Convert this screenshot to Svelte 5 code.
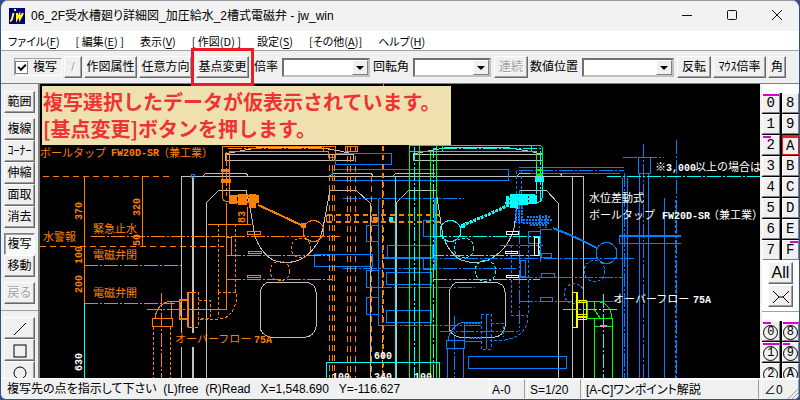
<script lang="ts">
    interface Layer {
        color: string;
        style?: string;
        d: string;
    }

    interface Label {
        x: number;
        y: number;
        text: string;
        color?: string;
        num?: boolean;
        turn?: boolean;
    }

    const ORANGE = '#ff8000';
    const BLUE = '#0080ff';
    const CYAN = '#00ffff';
    const GREEN = '#00ff00';
    const GREY = '#c0c0c0';
    const WHITE = '#ffffff';
    const YELLOW = '#ffff00';

    const menus = [
        { pre: 'ファイル(', key: 'F', post: ')' },
        { pre: '[ 編集(', key: 'E', post: ') ]' },
        { pre: '表示(', key: 'V', post: ')' },
        { pre: '[ 作図(', key: 'D', post: ') ]' },
        { pre: '設定(', key: 'S', post: ')' },
        { pre: '[その他(', key: 'A', post: ')]' },
        { pre: 'ヘルプ(', key: 'H', post: ')' },
    ];

    const toolGroups = [
        ['範囲'],
        ['複線', 'ｺｰﾅｰ', '伸縮', '面取', '消去'],
        ['複写', '移動'],
        ['戻る'],
    ];

    const layerRows = [['0', '8'], ['1', '9'], ['2', 'A'], ['3', 'B'], ['4', 'C'], ['5', 'D'], ['6', 'E'], ['7', 'F']];
    const groupRows = [['0', '8'], ['1', '9'], ['2', 'A']];
    const layerMarks: Record<string, string> = { '0': 'full', '2': 'left', F: 'right' };
    const groupMarks: Record<string, string> = { '0': 'left', '8': 'full', '1': 'full', '9': 'left' };

    const r = (x1: number, y1: number, x2: number, y2: number) => `M${x1} ${y1}H${x2}V${y2}H${x1}Z`;

    const layers: Layer[] = [
        // tank walls
        { color: GREY, d: 'M181 333V176H583V378M181 347V378M206 378V203L219 190H246L250 207L255 237Q262 254 273 260Q288 266 303 258Q319 248 323 228L330 190H356L370 203V378M203 176L206 173H246L248 176M330 176L334 173H371L373 176' },
        { color: GREY, style: 'thick', d: 'M193 176V333M193 347V378' },
        { color: GREY, d: 'M225 154H353V160H225ZM225 154L240 151L262 147H316L340 151L353 154M413 154H542V160H413ZM413 154L428 151L450 147H504L528 151L542 154' },
        { color: GREY, d: 'M396 378V203L409 190H436L443 237Q450 254 461 260Q477 266 492 258Q509 248 514 228L520 190H546L558 203V378M393 176L396 173H435M517 176L520 173H560L562 176M572 176V378' },
        { color: GREY, d: 'M270 282H306Q316 284 316 292V327Q314 336 306 337H270Q261 335 260 327V292Q262 283 270 282ZM459 282H495Q505 284 505 292V327Q503 336 495 337H459Q450 335 449 327V292Q451 283 459 282Z' },

        // planned piping, blue
        { color: BLUE, d: r(335, 153, 391, 164) + r(332, 169, 508, 180) + r(366, 225, 378, 241) + r(314, 254, 372, 266) + r(366, 270, 378, 287) + r(366, 297, 378, 314) },
        { color: BLUE, d: r(386, 272, 431, 284) + r(386, 310, 431, 322) + r(387, 245, 432, 257) + r(423, 220, 435, 236) + r(423, 258, 435, 269) + r(468, 356, 566, 368) + 'M378 199V325H395' },
        { color: BLUE, d: r(528, 231, 540, 243) + r(541, 253, 551, 257) + r(541, 273, 554, 277) + r(540, 297, 552, 301) + r(520, 260, 525, 276) + r(446, 340, 464, 348) + 'M447 348V378M463 348V378M448 340Q451 325 464 322H481M464 322V340M464 325H481M464 341H481' },
        { color: BLUE, d: 'M519 167H624M530 173H620M622 178V378M627 178V378M639 173V378M648 173V378M664 198V378M638 173V157H650V173ZM619 243H681M619 236V243M540 229V262M540 229H552' },
        { color: BLUE, style: 'thick', d: 'M619 236H681M384 258H424M435 198V268M553 228L570 235L583 241L597 248' },
        { color: BLUE, style: 'center', d: 'M343 198H464M343 268H516M378 287H475M384 325H478M384 258H634M500 245H543M519 190V331M440 331H519M454 316V378M519 277H622M519 301H622M519 170H624M624 173V378M643 144V378M623 157H664M676 140V378' },
        { color: BLUE, style: 'dash', d: 'M511 245V315M528 245V315M511 315H528M528 315Q528 336 505 340H490M481 314H486V349H481ZM486 314H491V349H486ZM516 171V220M521 171V222M491 323H503V337M675 200V378' },
        { color: BLUE, style: 'dots', d: 'M516 195V223M519 195V223M522 195V223M523 220H552M523 223H550M527 217H550M530 225H548M540 215V228M546 215V228M470 338H481M466 323H481' },
        { color: BLUE, d: 'M617 253A10 10 0 1 1 596 253A10 10 0 1 1 617 253' },
        { color: BLUE, style: 'dash', d: 'M605 271A10 10 0 1 1 584 271A10 10 0 1 1 605 271M583 289A10 10 0 1 0 580 302' },

        // existing piping, orange
        { color: ORANGE, style: 'longdash', d: 'M43 176H171M40 246H224' },
        { color: ORANGE, d: 'M84 176V303M142 176V246M383 84V87' },
        { color: ORANGE, style: 'center', d: 'M91 236H340M84 265H181M84 303H175M227 255H330M227 279H332M161 293V378M147 309H192M226 152V196M228 148H330' },
        { color: ORANGE, d: 'M222 146H335V157H328V151H229V202Q222 202 222 195ZM323 146V151M345 146H357V151H345ZM208 224H251M247 207V224M226 203V309H193M326 215V222' },
        { color: ORANGE, d: r(226, 237, 231, 255) + r(247, 231, 260, 234) + r(248, 251, 261, 253) + r(247, 275, 260, 277) + r(152, 318, 172, 326) + r(179, 299, 188, 319) + 'M155 318Q157 303 171 301H179M171 301V318' },
        { color: ORANGE, d: 'M324 231A10 10 0 1 1 303 231A10 10 0 1 1 324 231' },
        { color: ORANGE, d: 'M188 292H193V327H188ZM187 292V327M179 300H187M179 318H187M180 302V316' },
        { color: ORANGE, style: 'thick', d: 'M222 170H230M221 180H231M222 182H230M258 205L280 215L303 226M230 196H259M230 202H259' },
        { color: ORANGE, style: 'dash', d: 'M153 327V378M170 327V378M218 224V292M235 224V292M218 292H236V302Q232 318 220 319H199M193 292H198V327H193M199 300H210V318H199M218 292V318' },
        { color: ORANGE, style: 'dash', d: 'M311 248A10 10 0 1 1 291 248A10 10 0 1 1 311 248M290 271A10 10 0 1 1 270 271A10 10 0 1 1 290 271' },
        { color: ORANGE, style: 'longdash', d: 'M329 155V378M332 155V378M334 155V378M347 146V378M350 146V378M355 146V378M371 176V378' },
        { color: GREY, style: 'dash', d: 'M382 180V378' },
        { color: ORANGE, style: 'thickdash', d: 'M327 215H440M327 222H440M383 146V378' },

        // supply line, green and cyan
        { color: GREEN, d: 'M409 378V145H540L542 147V165M419 145V378M430 378V151M436 151V378M409 151H536V165M442 145V151M531 145V151M436 145V151' },
        { color: CYAN, d: 'M395 176V378M536 165V194M542 165V198Q541 203 535 203' },
        { color: CYAN, style: 'center', d: 'M414 147V378M433 378V148H540V200M433 236H539V255H433M433 279H540M607 176H760' },
        { color: CYAN, style: 'thick', d: 'M535 178H544M535 181H543M507 199H536M505 203H536M511 195H535M536 195V202' },
        { color: CYAN, style: 'rod', d: 'M509 205L485 216L461 226' },
        { color: CYAN, d: 'M461 231A10 10 0 1 1 440 231A10 10 0 1 1 461 231M326 378V362H439V378M84 303V378' },
        { color: CYAN, style: 'dash', d: 'M474 248A10 10 0 1 1 454 248A10 10 0 1 1 474 248M496 271A10 10 0 1 1 475 271A10 10 0 1 1 496 271' },
        { color: GREEN, style: 'thick', d: 'M536 170H543M536 175H543' },
        { color: WHITE, d: r(506, 231, 518, 234) + r(505, 251, 517, 253) + r(534, 237, 538, 255) + r(506, 275, 518, 277) },
        { color: YELLOW, d: 'M572 292H577V327H572ZM576 292V327M577 300H586V319H577M577 316H586M577 317H586' },
        { color: YELLOW, d: 'M577 302H586M577 314H586M579 300V303M583 315V319' },
        { color: GREEN, d: 'M587 318V301H596Q611 303 612 318H587M594 301V309L600 318M594 318V378M594 326H612M612 318V378' },
        { color: CYAN, style: 'center', d: 'M603 294V378M563 309H619' },
        { color: '#ff80ff', style: 'thick', d: 'M600 326H607' },
    ];

    // solid valve bodies: x, y, width, height
    const valves = [
        { color: ORANGE, boxes: [[221, 169, 9, 3], [221, 179, 10, 4], [229, 195, 8, 9], [238, 194, 9, 11], [249, 194, 7, 14], [256, 196, 3, 7], [301, 223, 5, 5], [373, 217, 5, 5]] },
        { color: CYAN, boxes: [[535, 177, 9, 5], [529, 195, 8, 9], [519, 194, 9, 11], [510, 194, 8, 14], [506, 196, 3, 7], [461, 224, 4, 4], [389, 217, 4, 5]] },
    ];

    const labels: Label[] = [
        { x: 40, y: 157, text: 'ボールタップ' },
        { x: 111, y: 156, text: 'FW20D-SR', num: true },
        { x: 158, y: 157, text: '（兼工業）' },
        { x: 93, y: 233, text: '緊急止水' },
        { x: 43, y: 241, text: '水警報' },
        { x: 93, y: 259, text: '電磁弁閉' },
        { x: 93, y: 297, text: '電磁弁開' },
        { x: 175, y: 343, text: 'オーバーフロー' },
        { x: 254, y: 343, text: '75A', num: true },
        { x: 82, y: 220, text: '370', num: true, turn: true },
        { x: 140, y: 216, text: '320', num: true, turn: true },
        { x: 140, y: 246, text: '50', num: true, turn: true },
        { x: 82, y: 264, text: '100', num: true, turn: true },
        { x: 82, y: 293, text: '200', num: true, turn: true },
        { x: 245, y: 223, text: '83', num: true, turn: true },
        { x: 82, y: 371, text: '630', num: true, turn: true, color: WHITE },
        { x: 374, y: 359, text: '600', num: true, color: WHITE },
        { x: 332, y: 380, text: '100', num: true, color: WHITE },
        { x: 374, y: 380, text: '340', num: true, color: WHITE },
        { x: 414, y: 380, text: '100', num: true, color: WHITE },
        { x: 655, y: 171, text: '※', color: WHITE },
        { x: 666, y: 171, text: '3,000', num: true, color: WHITE },
        { x: 695, y: 171, text: '以上の場合は', color: WHITE },
        { x: 589, y: 202, text: '水位差動式', color: WHITE },
        { x: 589, y: 219, text: 'ボールタップ', color: WHITE },
        { x: 662, y: 219, text: 'FW20D-SR', num: true, color: WHITE },
        { x: 708, y: 219, text: '（兼工業）', color: WHITE },
        { x: 613, y: 303, text: 'オーバーフロー', color: WHITE },
        { x: 693, y: 303, text: '75A', num: true, color: WHITE },
    ];

    let copy = $state(true);
    let activeTool = $state('複写');
    let activeLayer = $state('A');
</script>

<div class="window">
    <header class="title-bar">
        <svg class="logo" viewBox="0 0 16 16" aria-hidden="true">
            <rect width="16" height="16" fill="#000080" />
            <path d="M5 2h2M4.500 5L3 11Q2.500 13 1 13M8 5L8 11L10.500 6.500L11 11L14 5" fill="none" stroke="#ffff00" stroke-width="2" />
        </svg>
        <h1>06_2F受水槽廻り詳細図_加圧給水_2槽式電磁弁 - jw_win</h1>
        <div class="win-buttons">
            <button aria-label="最小化"><svg viewBox="0 0 10 10"><path d="M0 5.500H10" /></svg></button>
            <button aria-label="最大化"><svg viewBox="0 0 10 10"><rect x="0.500" y="0.500" width="9" height="9" rx="1" /></svg></button>
            <button aria-label="閉じる"><svg viewBox="0 0 10 10"><path d="M0 0L10 10M10 0L0 10" /></svg></button>
        </div>
    </header>

    <nav class="menu-bar">
        {#each menus as menu (menu.key)}
            <button>{menu.pre}<u>{menu.key}</u>{menu.post}</button>
        {/each}
    </nav>

    <div class="toolbar">
        <label class="check">
            <input type="checkbox" bind:checked={copy} />
            <span>複写</span>
        </label>
        <button class="btn slash dim">/</button>
        <button class="btn wide">作図属性</button>
        <button class="btn wide">任意方向</button>
        <span class="highlight"><button class="btn wide">基点変更</button></span>
        <label class="field">
            <span>倍率</span>
            <span class="combo mid"><select><option></option></select></span>
        </label>
        <label class="field">
            <span>回転角</span>
            <span class="combo narrow"><select><option></option></select></span>
        </label>
        <button class="btn small dim">連続</button>
        <label class="field">
            <span>数値位置</span>
            <span class="combo long"><select><option></option></select></span>
        </label>
        <button class="btn small">反転</button>
        <button class="btn wide">ﾏｳｽ倍率</button>
        <button class="btn slash">角</button>
    </div>

    <main>
        <aside class="tools">
            {#each toolGroups as group}
                <div class="tool-group">
                    {#each group as tool (tool)}
                        <button
                            class="btn"
                            class:pressed={tool === activeTool}
                            class:dim={tool === '戻る'}
                            onclick={() => (activeTool = tool)}
                        >{tool}</button>
                    {/each}
                </div>
            {/each}
            <div class="tool-group shapes">
                <button class="btn" aria-label="線"><svg viewBox="0 0 14 14"><path d="M1 13L13 1" /></svg></button>
                <button class="btn" aria-label="矩形"><svg viewBox="0 0 14 14"><rect x="1" y="1" width="12" height="12" /></svg></button>
                <button class="btn" aria-label="円"><svg viewBox="0 0 14 14"><circle cx="7" cy="7" r="6" /></svg></button>
            </div>
        </aside>

        <section class="canvas">
            <svg class="drawing" aria-label="受水槽廻り詳細図">
                <g transform="translate(-40 -84)">
                    {#each layers as layer}
                        <path class={['line', layer.style]} d={layer.d} stroke={layer.color} />
                    {/each}
                    {#each valves as valve}
                        {#each valve.boxes as [x, y, w, h]}
                            <rect {x} {y} width={w} height={h} fill={valve.color} />
                        {/each}
                    {/each}
                    <circle class="line" cx="193" cy="176" r="2" stroke={BLUE} />
                    {#each labels as l}
                        <text
                            class={['label', l.num && 'num']}
                            fill={l.color ?? ORANGE}
                            transform={`translate(${l.x} ${l.y})${l.turn ? ' rotate(-90)' : ''}`}
                        >{l.text}</text>
                    {/each}
                </g>
            </svg>
            <p class="callout">複写選択したデータが仮表示されています。<br />[基点変更]ボタンを押します。</p>
        </section>

        <aside class="palette">
            <div class="grid">
                {#each layerRows.flat() as n (n)}
                    <button
                        class={['key', layerMarks[n], n === activeLayer && 'active']}
                        onclick={() => (activeLayer = n)}
                    >{n}</button>
                {/each}
            </div>
            <div class="palette-tools">
                <button class="btn">All</button>
                <button class="btn" aria-label="切替"><svg viewBox="0 0 18 14"><path d="M1 1L7 7L1 13M17 1L11 7L17 13M7 7H11" /></svg></button>
            </div>
            <div class="grid groups">
                {#each groupRows.flat() as n (n)}
                    <button class={['key', groupMarks[n]]}><span class="ring">{n}</span></button>
                {/each}
            </div>
        </aside>
    </main>

    <footer class="status">
        <span class="message">複写先の点を指示して下さい&nbsp; (L)free&nbsp; (R)Read&nbsp;&nbsp; X=1,548.690&nbsp;&nbsp; Y=-116.627</span>
        <button class="paper">A-0</button>
        <button class="scale">S=1/20</button>
        <button class="layer">[A-C]ワンポイント解説</button>
        <button class="angle">∠0</button>
        <svg class="grip" viewBox="0 0 12 12" aria-hidden="true"><path d="M1 12L12 1M5 12L12 5M9 12L12 9" /></svg>
    </footer>
</div>

<style>
    :global(body) {
        background: #34508c;
    }
    .window {
        box-sizing: border-box;
        display: flex;
        flex-direction: column;
        height: 100vh;
        border: 1px solid #34508c;
        border-top-color: #9a9aa6;
        border-radius: 8px 8px 6px 6px;
        overflow: hidden;
        background: #f0f0f0;
        color: #000;
        font: 12px/16px "Liberation Sans", "Noto Sans CJK JP", sans-serif;
        white-space: nowrap;
    }
    button, select {
        font: inherit;
        color: inherit;
        margin: 0;
    }
    button {
        padding: 0;
        border: none;
        background: none;
    }

    .title-bar {
        display: flex;
        align-items: center;
        flex-shrink: 0;
        height: 30px;
        padding-left: 8px;
        background: #f2f2f2;
    }
    .logo { width: 16px; height: 16px; }
    h1 {
        flex: 1;
        margin: 0 0 0 6px;
        font-size: 12px;
        font-weight: 400;
        font-feature-settings: "palt";
    }
    .win-buttons { display: flex; }
    .win-buttons button {
        width: 45px;
        height: 30px;
    }
    .win-buttons svg {
        width: 10px;
        height: 10px;
        fill: none;
        stroke: #111;
        overflow: visible;
    }

    .menu-bar {
        display: flex;
        align-items: center;
        flex-shrink: 0;
        gap: 16px;
        height: 19px;
        padding-left: 7px;
        background: #fff;
        font-family: "Noto Sans CJK JP", sans-serif;
        font-size: 11px;
        font-feature-settings: "palt";
    }
    u { text-underline-offset: 2px; }

    .toolbar {
        display: flex;
        align-items: center;
        flex-shrink: 0;
        gap: 2px;
        height: 32px;
        padding-left: 13px;
        border-top: 1px solid #a0a0a0;
        border-bottom: 1px solid #808080;
        font-feature-settings: "palt";
    }
    .toolbar > * { flex-shrink: 0; }
    .btn {
        box-sizing: border-box;
        height: 22px;
        border: 1px solid;
        border-color: #fff #696969 #696969 #fff;
        box-shadow: inset -1px -1px #a0a0a0;
        background: #f0f0f0;
        text-align: center;
    }
    .btn.pressed {
        border-color: #808080 #fff #fff #808080;
        box-shadow: inset 1px 1px #a0a0a0;
        background: #f8f8f8;
    }
    .dim {
        color: #a0a0a0;
        text-shadow: 1px 1px #fff;
    }
    .wide { width: 53px; }
    .small { width: 34px; }
    .slash { width: 18px; }
    .check {
        display: flex;
        align-items: center;
        gap: 5px;
        width: 46px;
        height: 16px;
        border: 1px solid;
        border-color: #a0a0a0 #fff #fff #a0a0a0;
    }
    .check input {
        appearance: none;
        position: relative;
        box-sizing: border-box;
        width: 13px;
        height: 13px;
        margin: 0;
        border: 1px solid #808080;
        background: #fff;
    }
    .check input:checked::after {
        content: "";
        position: absolute;
        left: 2px;
        top: 2px;
        width: 6px;
        height: 3px;
        border: solid #000;
        border-width: 0 0 2px 2px;
        transform: rotate(-45deg);
    }
    .highlight {
        margin: 0 3px 0 2px;
        outline: 3px solid #ed1c24;
        outline-offset: 2px;
        padding: 3px 0;
        z-index: 2;
        display: flex;
    }
    .field {
        display: flex;
        align-items: center;
        gap: 4px;
        margin-right: 1px;
    }
    .combo { position: relative; }
    .combo select {
        appearance: none;
        display: block;
        box-sizing: border-box;
        width: 100%;
        height: 19px;
        border: 2px solid;
        border-color: #707070 #c0c0c0 #c0c0c0 #707070;
        border-radius: 0;
        background: #fff;
    }
    .combo::before {
        content: "";
        position: absolute;
        top: 2px;
        right: 2px;
        box-sizing: border-box;
        width: 16px;
        height: 15px;
        border: 1px solid;
        border-color: #fff #808080 #808080 #fff;
        background: #f0f0f0;
        pointer-events: none;
    }
    .combo::after {
        content: "";
        position: absolute;
        top: 8px;
        right: 6px;
        border: 4px solid transparent;
        border-top-color: #000;
        border-bottom: none;
        pointer-events: none;
    }
    .mid { width: 88px; }
    .narrow { width: 78px; }
    .long { width: 92px; }

    main {
        display: flex;
        flex: 1;
        min-height: 0;
    }
    .tools {
        display: flex;
        flex-direction: column;
        flex-shrink: 0;
        gap: 5px;
        width: 37px;
        padding-top: 7px;
        border-right: 2px solid #808080;
        overflow: hidden;
    }
    .tool-group {
        display: flex;
        flex-direction: column;
        padding: 0 3px;
        flex-shrink: 0;
    }
    .tool-group.shapes {
        padding-top: 6px;
        margin-top: 1px;
        border-top: 1px solid #a0a0a0;
    }
    .shapes svg, .palette-tools svg {
        width: 14px;
        height: 14px;
        fill: none;
        stroke: #000;
        vertical-align: middle;
    }
    .palette-tools svg { width: 18px; }

    .canvas {
        position: relative;
        flex: 1;
        min-width: 0;
        background: #000;
        overflow: hidden;
    }
    .drawing {
        display: block;
        width: 100%;
        height: 100%;
    }
    .line {
        fill: none;
        stroke-width: 1px;
        shape-rendering: crispEdges;
    }
    .thick { stroke-width: 2px; }
    .rod { stroke-width: 3px; stroke-dasharray: 3 1; }
    .dash { stroke-dasharray: 3 2; }
    .longdash { stroke-dasharray: 6 4; }
    .thickdash { stroke-width: 2px; stroke-dasharray: 5 4; }
    .center { stroke-dasharray: 14 2 2 2; }
    .dots { stroke-width: 2px; stroke-dasharray: 2 1; }
    .label {
        font: 11px "Noto Sans CJK JP", sans-serif;
    }
    .label.num {
        font: bold 10px "Liberation Mono", monospace;
    }
    .callout {
        position: absolute;
        left: 2px;
        top: 2px;
        margin: 0;
        padding: 2px 11px 3px 1px;
        background: #efe0b0;
        color: #ee3333;
        font-family: "Noto Sans CJK JP", sans-serif;
        font-size: 20px;
        line-height: 27px;
        font-weight: 700;
    }

    .palette {
        display: flex;
        flex-direction: column;
        flex-shrink: 0;
        width: 37px;
        padding-top: 9px;
        border-left: 2px solid #f0f0f0;
        background: #fff;
        overflow: hidden;
    }
    .grid {
        display: grid;
        grid-template-columns: 1fr 1fr;
        grid-auto-rows: 20px;
        gap: 1px 2px;
        background: #000;
        flex-shrink: 0;
    }
    .key {
        position: relative;
        border: 1px solid;
        border-color: #fff #808080 #808080 #fff;
        background: #f0f0f0;
        font: 14px/16px "Liberation Mono", monospace;
    }
    .key.active {
        border: 1px solid #ed1c24;
        border-top-width: 3px;
        line-height: 14px;
    }
    .full::before, .left::before, .right::before {
        content: "";
        position: absolute;
        top: 0;
        left: 0;
        right: 0;
        height: 2px;
        background: #d800d8;
    }
    .left::before { right: 50%; }
    .right::before { left: 50%; }
    .ring {
        display: inline-block;
        width: 13px;
        height: 13px;
        border: 1px solid #000;
        border-radius: 50%;
        font-size: 12px;
        line-height: 13px;
    }
    .palette-tools {
        display: flex;
        flex-direction: column;
        align-items: center;
        flex-shrink: 0;
        gap: 1px;
        padding: 2px 0 4px;
        border-bottom: 1px solid #a0a0a0;
        margin-bottom: 9px;
    }
    .palette-tools .btn {
        width: 25px;
        font-size: 16px;
    }

    .status {
        position: relative;
        display: flex;
        flex-shrink: 0;
        gap: 2px;
        height: 20px;
        border-top: 1px solid #fff;
        line-height: 20px;
        font-feature-settings: "palt";
    }
    .message {
        flex: 1;
        min-width: 0;
        padding-left: 6px;
        overflow: hidden;
    }
    .status button {
        box-sizing: border-box;
        border: 1px solid;
        border-color: #fff #a0a0a0 #f0f0f0 #fff;
        padding-left: 2px;
        text-align: left;
    }
    .paper { width: 36px; }
    .scale { width: 54px; }
    .layer { width: 176px; }
    .angle { width: 38px; }
    .grip {
        position: absolute;
        right: 0;
        bottom: 0;
        width: 12px;
        height: 12px;
        stroke: #a0a0a0;
    }
</style>
